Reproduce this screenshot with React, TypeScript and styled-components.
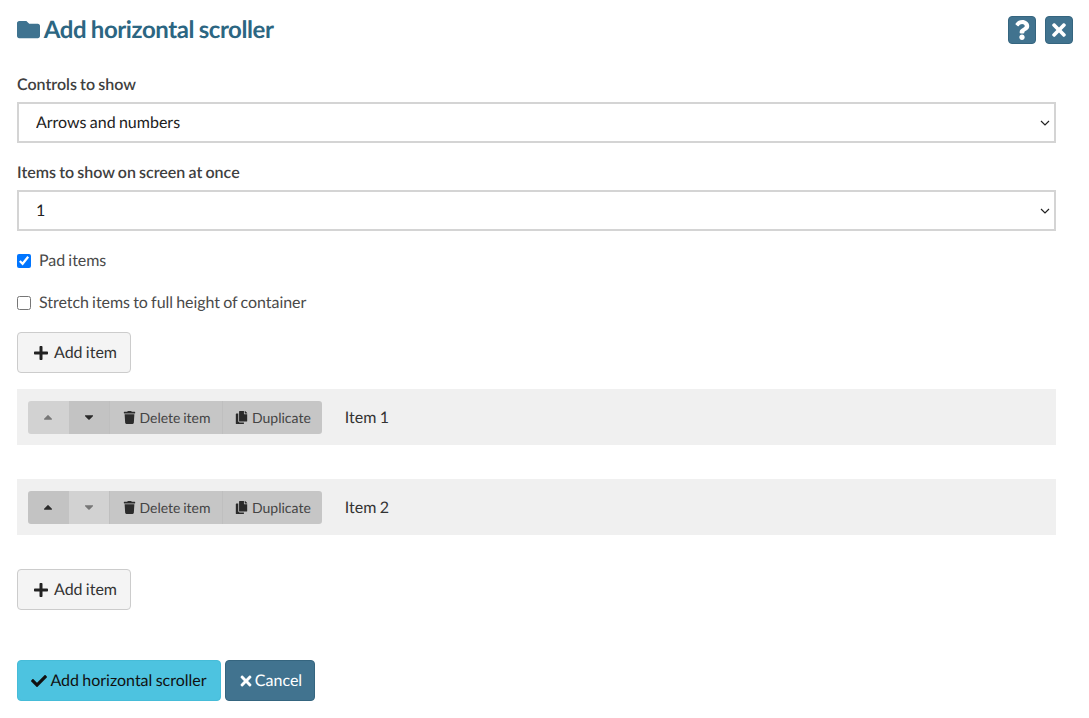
import React from "react";
import styled, {createGlobalStyle} from "styled-components";
import {FaFolder, FaQuestion, FaTimes, FaPlus, FaTrash, FaCheck, FaCaretUp, FaCaretDown, FaCopy} from "react-icons/fa";

const GlobalStyle = createGlobalStyle`
  html, body {
    margin: 0;
    background: #fff;
    font-family: Lato, "Liberation Sans", sans-serif;
    font-size: 16px;
    color: #333;
    text-rendering: geometricPrecision;
    word-spacing: -0.8px;
  }

  button, select {
    text-rendering: geometricPrecision;
    word-spacing: -0.8px;
    white-space: nowrap;
  }
`

const items = [
    {title: "Item 1", upDisabled: true, downDisabled: false},
    {title: "Item 2", upDisabled: false, downDisabled: true},
]

const chevron = "data:image/svg+xml,%3Csvg xmlns='http://www.w3.org/2000/svg' width='10' height='6' viewBox='0 0 10 6'%3E%3Cpath d='M1 1l4 4 4-4' fill='none' stroke='%23222' stroke-width='1.2'/%3E%3C/svg%3E"

const App: React.FC = () => {
    return <Page>
        <GlobalStyle/>
        <Header>
            <Title><FaFolder/> Add horizontal scroller</Title>
            <HeaderActions>
                <IconButton aria-label="Help"><FaQuestion/></IconButton>
                <IconButton aria-label="Close"><FaTimes/></IconButton>
            </HeaderActions>
        </Header>

        <Field>
            <Label>Controls to show</Label>
            <Select defaultValue="both">
                <option value="both">Arrows and numbers</option>
                <option value="arrows">Arrows</option>
                <option value="numbers">Numbers</option>
            </Select>
        </Field>
        <Field>
            <Label>Items to show on screen at once</Label>
            <Select defaultValue="1">
                <option value="1">1</option>
                <option value="2">2</option>
                <option value="3">3</option>
            </Select>
        </Field>

        <CheckRow>
            <Checkbox type="checkbox" defaultChecked/>
            Pad items
        </CheckRow>
        <CheckRow>
            <Checkbox type="checkbox"/>
            Stretch items to full height of container
        </CheckRow>

        <AddButton><FaPlus/> Add item</AddButton>

        <ItemList>
            {items.map(item =>
                <ItemRow key={item.title}>
                    <ItemToolbar>
                        <ArrowButton disabled={item.upDisabled}><FaCaretUp/></ArrowButton>
                        <ArrowButton disabled={item.downDisabled}><FaCaretDown/></ArrowButton>
                        <ToolButton><FaTrash/> Delete item</ToolButton>
                        <ToolButton><FaCopy/> Duplicate</ToolButton>
                    </ItemToolbar>
                    <ItemTitle>{item.title}</ItemTitle>
                </ItemRow>
            )}
        </ItemList>

        <AddButton><FaPlus/> Add item</AddButton>

        <Footer>
            <SubmitButton><FaCheck/> Add horizontal scroller</SubmitButton>
            <CancelButton><FaTimes/> Cancel</CancelButton>
        </Footer>
    </Page>
};

const Page = styled.div`
  padding: 0 33px 0 17px;
`

const Header = styled.div`
  display: flex;
  align-items: center;
  justify-content: space-between;
  height: 59px;
  margin-right: -17px;
`

const Title = styled.h1`
  margin: 0;
  font-size: 24px;
  font-weight: 700;
  letter-spacing: -0.42px;
  color: #2c6682;

  svg {
    font-size: 23px;
    vertical-align: -3px;
    color: #3f7390;
  }
`

const HeaderActions = styled.div`
  display: flex;
  gap: 9px;
`

const IconButton = styled.button`
  display: flex;
  align-items: center;
  justify-content: center;
  width: 28px;
  height: 28px;
  padding: 0;
  border: 1px solid #35657f;
  border-radius: 4px;
  background: #41738f;
  color: #fff;
  font-size: 20px;
`

const Field = styled.div`
  margin-top: 15px;

  & + & {
    margin-top: 19px;
  }
`

const Label = styled.label`
  display: block;
  height: 19px;
  line-height: 21px;
  font-weight: 600;
  font-size: 16px;
  color: #404040;
`

const Select = styled.select`
  display: block;
  box-sizing: border-box;
  width: 100%;
  height: 41px;
  margin-top: 9px;
  padding: 0 13px 0 17px;
  border: 2px solid #d4d4d4;
  border-radius: 0;
  appearance: none;
  background: #fff url("${chevron}") no-repeat right 4px center;
  font-family: inherit;
  font-size: 16px;
  color: #222;
`

const CheckRow = styled.label`
  display: flex;
  align-items: center;
  gap: 8px;
  height: 20px;
  margin-top: 19px;
  letter-spacing: -0.05px;
  color: #4a4a4a;
  font-size: 16px;

  & + & {
    margin-top: 22px;
  }
`

const Checkbox = styled.input`
  width: 14px;
  height: 14px;
  margin: 1px 0 0;
`

const AddButton = styled.button`
  display: flex;
  align-items: center;
  gap: 5px;
  box-sizing: border-box;
  width: 114px;
  height: 41px;
  margin-top: 20px;
  padding: 0 15px;
  border: 1px solid #ccc;
  border-radius: 4px;
  background: #f4f4f4;
  font-family: inherit;
  font-size: 16px;
  color: #333;

  svg {
    flex: none;
    font-size: 16px;
    color: #222;
  }
`

const ItemList = styled.div`
  display: flex;
  flex-direction: column;
  gap: 34px;
  margin: 16px 0 34px;

  & + ${AddButton} {
    margin-top: 0;
  }
`

const ItemRow = styled.div`
  display: flex;
  align-items: center;
  gap: 23px;
  height: 56px;
  padding-left: 11px;
  background: #f0f0f0;
`

const ItemToolbar = styled.div`
  display: flex;
  height: 33px;
  border-radius: 3px;
  overflow: hidden;
`

const ArrowButton = styled.button<{disabled?: boolean}>`
  display: flex;
  align-items: center;
  justify-content: center;
  width: 40.5px;
  padding: 0;
  border: none;
  background: ${props => props.disabled ? "#d2d2d2" : "#c3c3c3"};
  color: ${props => props.disabled ? "#777" : "#2b2b2b"};
  font-size: 14px;
`

const ToolButton = styled.button`
  display: flex;
  align-items: center;
  gap: 4px;
  padding: 0 11px 0 12.5px;
  border: none;
  border-left: 1px solid #bfbfbf;
  background: #c6c6c6;
  font-family: inherit;
  font-size: 14px;
  color: #444;

  svg {
    flex: none;
    font-size: 13px;
    color: #2b2b2b;
  }
`

const ItemTitle = styled.span`
  font-size: 16px;
  color: #333;
`

const Footer = styled.div`
  display: flex;
  gap: 4px;
  margin-top: 50px;
  padding-bottom: 17px;
`

const SubmitButton = styled.button`
  display: flex;
  align-items: center;
  justify-content: center;
  gap: 3px;
  box-sizing: border-box;
  width: 204px;
  height: 41px;
  padding: 0;
  border: 1px solid #46bcd8;
  border-radius: 4px;
  background: #4dc3e0;
  font-family: inherit;
  font-size: 16px;
  color: #111;
`

const CancelButton = styled.button`
  display: flex;
  align-items: center;
  justify-content: center;
  gap: 1px;
  box-sizing: border-box;
  width: 90px;
  height: 41px;
  padding: 0;
  border: 1px solid #35657f;
  border-radius: 4px;
  background: #41738f;
  font-family: inherit;
  font-size: 16px;
  color: #fff;
`

export default App;
